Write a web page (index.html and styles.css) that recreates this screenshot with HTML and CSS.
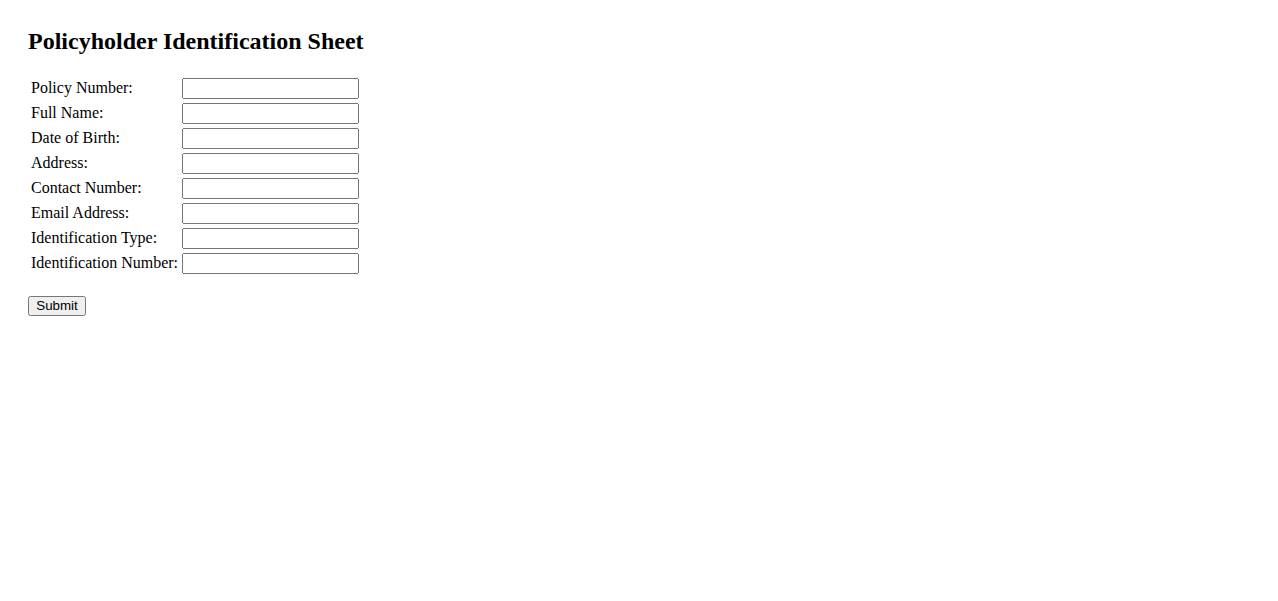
FILE: index.html
```html
<!DOCTYPE html>
<html>
<head>
<meta charset="utf-8">
<title>Policyholder Identification Sheet</title>
<link rel="stylesheet" href="styles.css">
</head>
<body>
<h2 class="title">Policyholder Identification Sheet</h2>
<form class="form">
<table class="fields">
<tr><td><label>Policy Number:</label></td><td><input type="text" class="field"></td></tr>
<tr><td><label>Full Name:</label></td><td><input type="text" class="field"></td></tr>
<tr><td><label>Date of Birth:</label></td><td><input type="text" class="field"></td></tr>
<tr><td><label>Address:</label></td><td><input type="text" class="field"></td></tr>
<tr><td><label>Contact Number:</label></td><td><input type="text" class="field"></td></tr>
<tr><td><label>Email Address:</label></td><td><input type="text" class="field"></td></tr>
<tr><td><label>Identification Type:</label></td><td><input type="text" class="field"></td></tr>
<tr><td><label>Identification Number:</label></td><td><input type="text" class="field"></td></tr>
</table>
<div class="actions"><button type="submit" class="submit">Submit</button></div>
</form>
</body>
</html>
```
FILE: styles.css
```css
body {
  margin: 0;
  padding: 28px;
  font-family: "Liberation Serif", "Times New Roman", serif;
  font-size: 16px;
  color: #000;
  background: #fff;
}
.title {
  font-size: 24px;
  font-weight: bold;
  margin: 0 0 19.92px;
}
.fields {
  border-spacing: 2px;
}
.fields td {
  padding: 1px;
}
.field {
  font-family: "Liberation Sans", Arial, sans-serif;
  font-size: 13.333px;
  width: 177px;
  box-sizing: border-box;
}
.actions {
  margin-top: 19px;
}
.submit {
  font-family: "Liberation Sans", Arial, sans-serif;
  font-size: 13.333px;
  width: 58px;
  height: 20px;
  padding: 0 6px;
}
```
